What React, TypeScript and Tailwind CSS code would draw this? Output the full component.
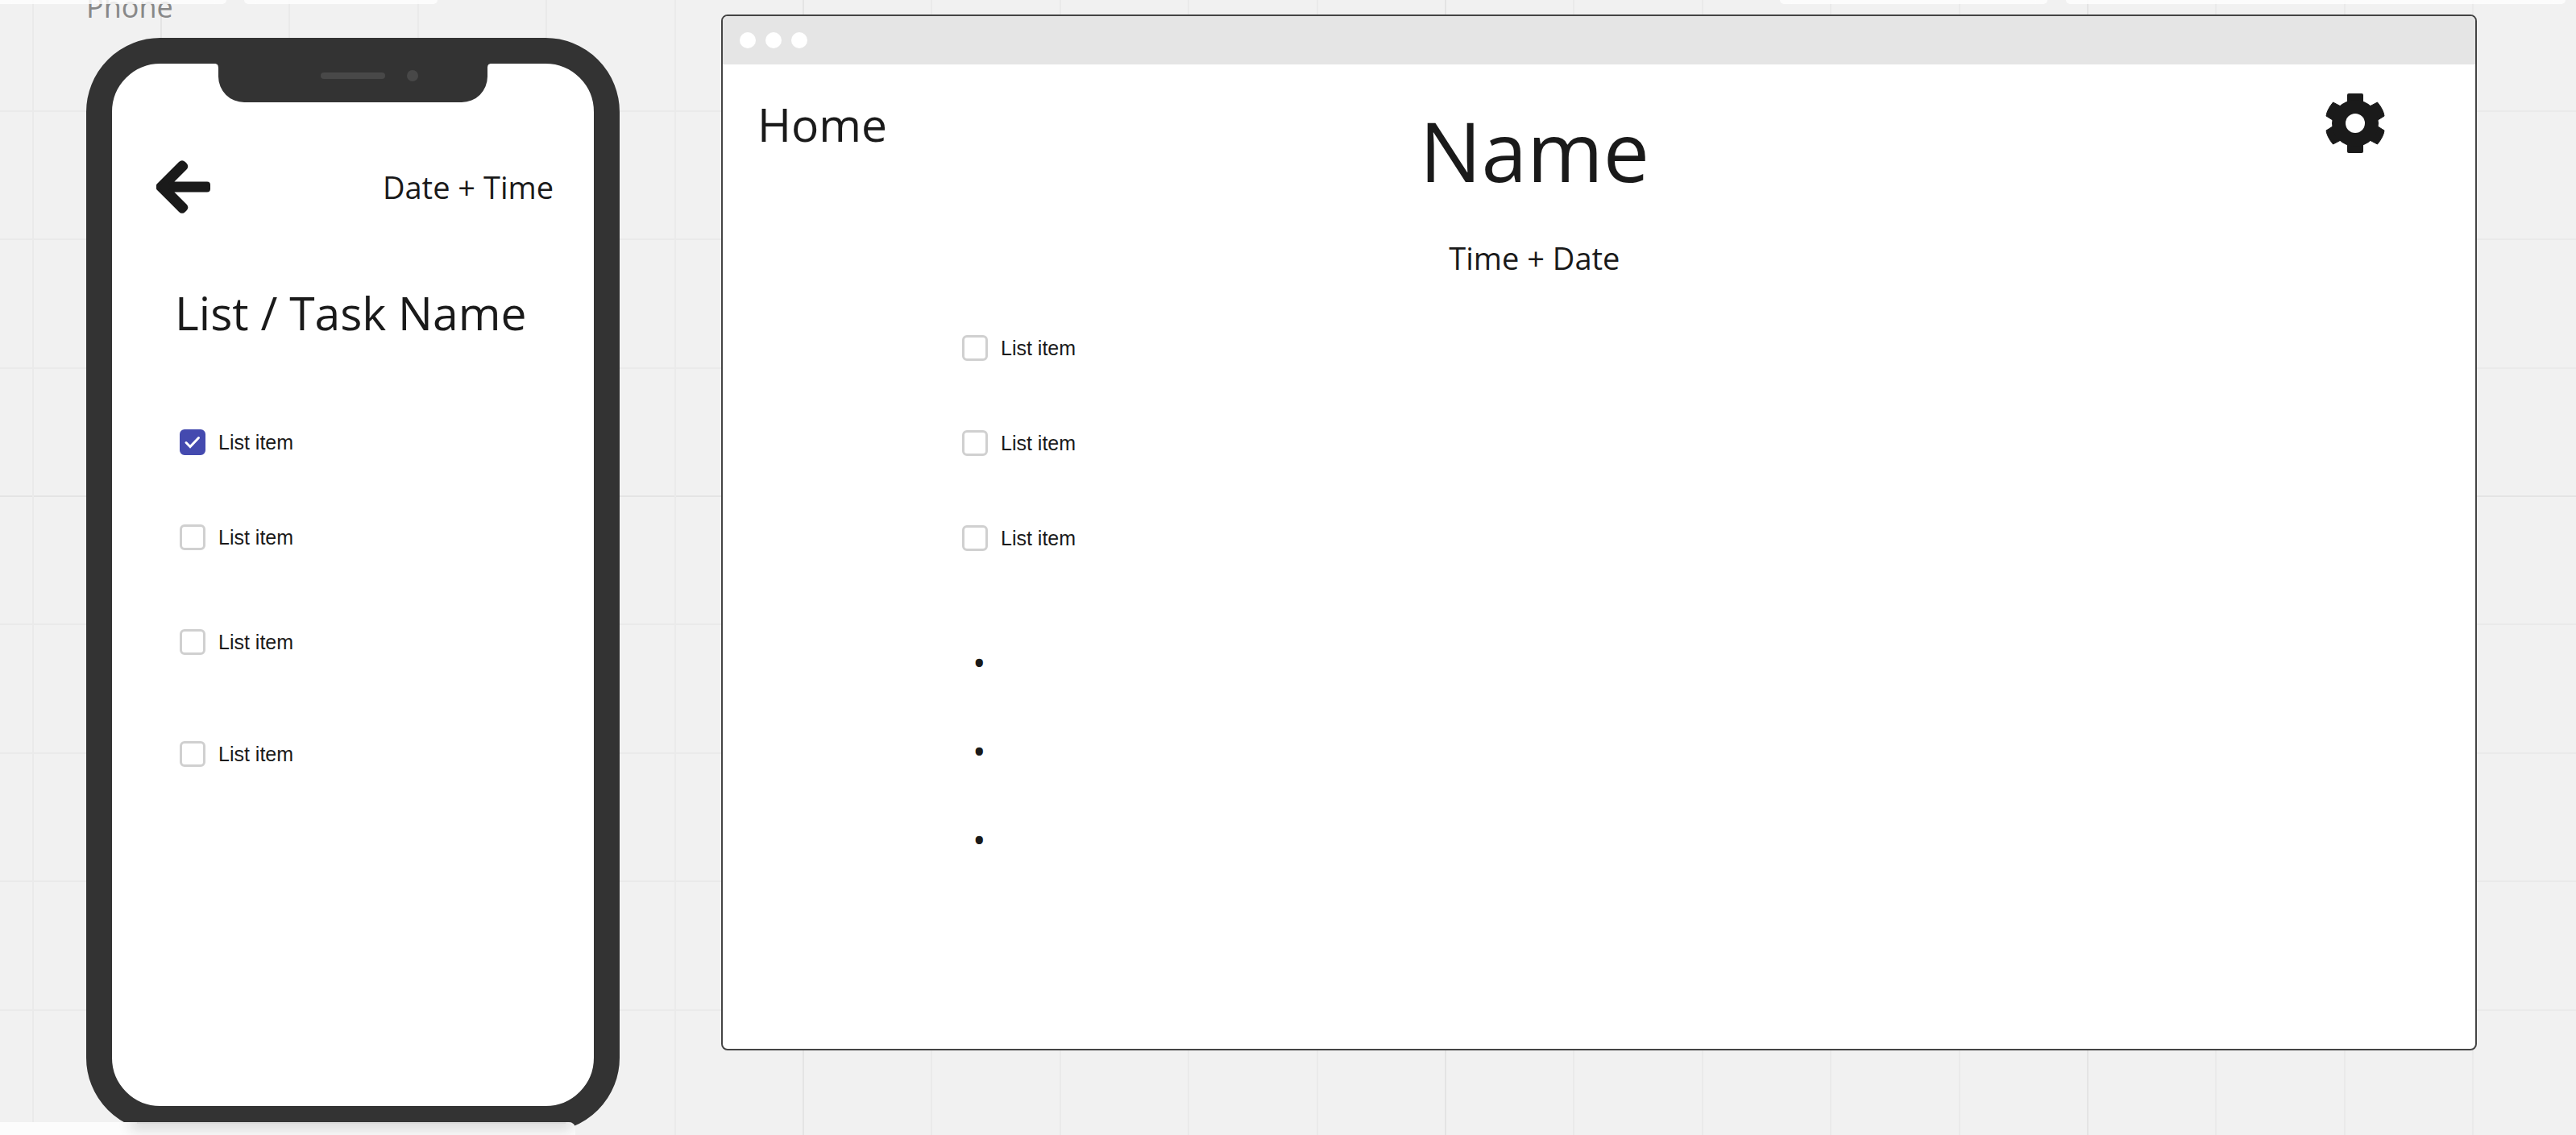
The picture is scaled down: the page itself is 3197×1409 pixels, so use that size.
import React from "react";

const GRID =
  "bg-[#f1f1f1] bg-[size:797px_797px] bg-[position:199px_615px] bg-[image:linear-gradient(to_right,#e4e4e4_0_2px,transparent_2px_159px,#eaeaea_159px_161px,transparent_161px_319px,#eaeaea_319px_321px,transparent_321px_478px,#eaeaea_478px_480px,transparent_480px_638px,#eaeaea_638px_640px,transparent_640px),linear-gradient(to_bottom,#e4e4e4_0_2px,transparent_2px_159px,#eaeaea_159px_161px,transparent_161px_319px,#eaeaea_319px_321px,transparent_321px_478px,#eaeaea_478px_480px,transparent_480px_638px,#eaeaea_638px_640px,transparent_640px)]";

function Item({ id, checked = false }: { id: string; checked?: boolean }) {
  return (
    <li className="flex h-8 items-center gap-4">
      <span className="relative flex size-8">
        <input
          id={id}
          type="checkbox"
          defaultChecked={checked}
          className="peer size-8 appearance-none rounded-md border-3 border-[#d0d0d0] bg-white checked:border-[#444aaf] checked:bg-[#444aaf]"
        />
        <svg
          viewBox="0 0 32 32"
          className="pointer-events-none absolute inset-0 hidden size-8 peer-checked:block"
          aria-hidden="true"
        >
          <path d="M8 16.5L13 21.500L23.500 10.500" fill="none" stroke="#fff" strokeWidth="3" strokeLinecap="round" />
        </svg>
      </span>
      <label htmlFor={id} className="font-['Liberation_Sans',sans-serif] text-[25px] leading-8">
        List item
      </label>
    </li>
  );
}

function Phone() {
  return (
    <figure className="flex w-[662px] shrink-0 flex-col">
      <figcaption className="h-[47px] text-[36px] leading-[18px] text-[#888]">Phone</figcaption>
      <div className="flex flex-1 flex-col rounded-[92px] border-32 border-[#333] bg-white">
        <svg viewBox="0 0 344 48" className="h-12 w-[344px] self-center" aria-hidden="true">
          <path d="M0 0H344C340 0 339 2 339 6V16A32 32 0 0 1 307 48H37A32 32 0 0 1 5 16V6C5 2 4 0 0 0Z" fill="#333" />
          <rect x="132" y="11" width="80" height="8" rx="4" fill="#484848" />
          <circle cx="246" cy="15" r="7" fill="#484848" />
        </svg>
        <div className="mt-[72px] flex items-center justify-between pr-[50px] pl-[55px]">
          <button type="button" aria-label="Back">
            <svg viewBox="0 0 67 66" className="h-[66px] w-[67px]" aria-hidden="true">
              <path
                d="M2 31L29.500 3.500Q32 1 34.500 3.500L36 5Q38.500 7.500 36 10L17.500 28.500H63Q65 28.500 65 30.500V35.500Q65 37.500 63 37.500H17.500L36 56Q38.500 58.500 36 61L34.500 62.500Q32 65 29.500 62.500L2 35Z"
                fill="#1a1a1a"
                stroke="#1a1a1a"
                strokeWidth="4"
                strokeLinejoin="round"
              />
            </svg>
          </button>
          <time className="text-[38px] leading-[52px]">Date + Time</time>
        </div>
        <h1 className="mt-[84px] pl-[78px] text-[57px] leading-[78px]">List / Task Name</h1>
        <ul className="mt-[106px] flex flex-col pl-[84px]">
          <Item id="phone-1" checked />
          <li className="h-[86px]" aria-hidden="true" />
          <Item id="phone-2" />
          <li className="h-[98px]" aria-hidden="true" />
          <Item id="phone-3" />
          <li className="h-[107px]" aria-hidden="true" />
          <Item id="phone-4" />
        </ul>
      </div>
    </figure>
  );
}

function Gear() {
  return (
    <svg viewBox="-37 -37 74 74" className="size-[74px]" aria-hidden="true">
      <g fill="#1a1a1a">
        <rect x="-10" y="-37" width="20" height="74" rx="2" />
        <path
          d="M-36 -9Q-35 -17 -27.500 -26L-18 -21L18 21L27.500 26Q35 17 36 9L28 4L-28 -4Z"
          stroke="#1a1a1a"
          strokeLinejoin="round"
        />
        <path
          d="M36 -9Q35 -17 27.500 -26L18 -21L-18 21L-27.500 26Q-35 17 -36 9L-28 4L28 -4Z"
          stroke="#1a1a1a"
          strokeLinejoin="round"
        />
        <circle r="29" />
      </g>
      <circle r="12" fill="#fff" />
    </svg>
  );
}

function Browser() {
  return (
    <section className="mt-[18px] mr-[123px] mb-[105px] ml-[126px] flex flex-1 flex-col rounded-lg border-2 border-[#444] bg-white">
      <div className="flex h-[60px] items-center gap-3 rounded-t-md bg-[#e5e5e5] pl-[21px]">
        <span className="size-5 rounded-full bg-white" />
        <span className="size-5 rounded-full bg-white" />
        <span className="size-5 rounded-full bg-white" />
      </div>
      <header className="grid grid-cols-[9fr_auto_10fr] items-start pt-9 pr-[112px] pl-[43px]">
        <a href="#home" className="justify-self-start text-[57px] leading-[76px]">Home</a>
        <div className="flex flex-col items-center">
          <h1 className="text-[102px] leading-[142px]">Name</h1>
          <time className="mt-9 text-[38px] leading-[52px]">Time + Date</time>
        </div>
        <button type="button" aria-label="Settings" className="justify-self-end">
          <Gear />
        </button>
      </header>
      <ul className="mt-[70px] flex flex-col gap-[86px] pl-[297px]">
        <Item id="desk-1" />
        <Item id="desk-2" />
        <Item id="desk-3" />
      </ul>
      <ul className="mt-[112px] flex flex-col gap-[58px] pl-[310px] text-[44px] leading-[52px]">
        <li>•</li>
        <li>•</li>
        <li>•</li>
      </ul>
    </section>
  );
}

export default function App() {
  return (
    <main className={`relative flex h-screen overflow-hidden pl-[107px] font-['Open_Sans',sans-serif] text-[#1a1a1a] ${GRID}`}>
      <div className="flex pb-1">
        <Phone />
      </div>
      <Browser />
      <div className="absolute top-0 left-0 h-[5px] w-[281px] rounded-br-lg bg-white/80 backdrop-blur-md" />
      <div className="absolute top-0 left-[303px] h-[5px] w-[240px] rounded-b-lg bg-white/80 backdrop-blur-md" />
      <div className="absolute top-0 right-[656px] h-[5px] w-[332px] rounded-b-lg bg-white/80 backdrop-blur-md" />
      <div className="absolute top-0 right-[13px] h-[5px] w-[620px] rounded-b-lg bg-white/80 backdrop-blur-md" />
      <div className="absolute bottom-0 left-0 h-4 w-[714px] overflow-hidden rounded-tr-lg bg-[#fcfcfc]">
        <div className="mr-3 ml-[170px] h-0.5 bg-[#dadada] shadow-[0_0_16px_8px_#dadada]" />
      </div>
    </main>
  );
}
